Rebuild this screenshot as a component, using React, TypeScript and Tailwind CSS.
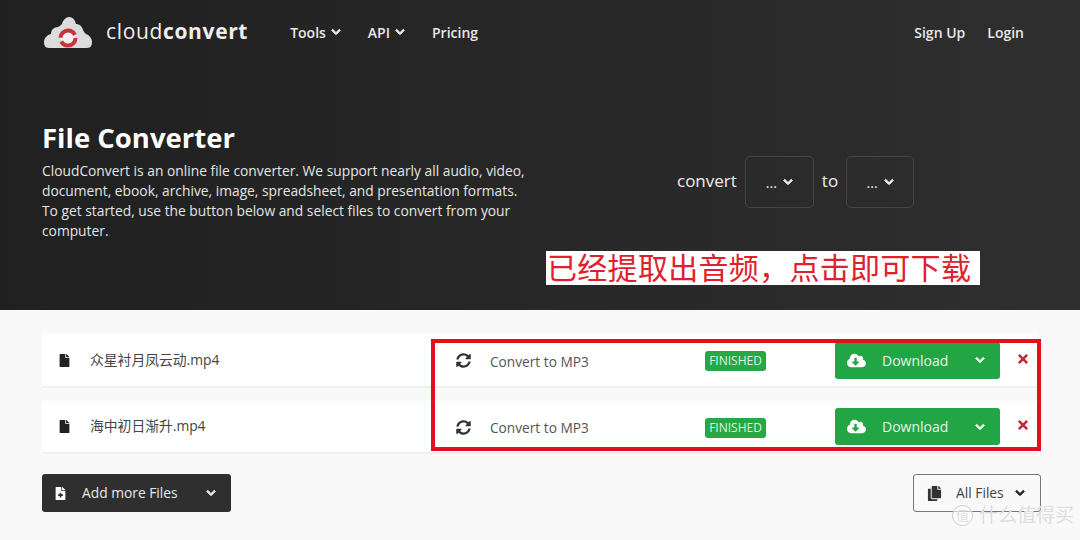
import { FaChevronDown, FaCloudDownloadAlt, FaCopy, FaFile, FaFileMedical, FaSyncAlt, FaTimes } from "react-icons/fa";

const files = ["众星衬月凤云动.mp4", "海中初日渐升.mp4"];

const Logo = () => (
  <svg width="48" height="32" viewBox="0 0 48 32" className="mt-[2px]" aria-hidden>
    <path
      d="M5 31 C1 31 0 28 0 25 C0 21 3 18 7 17 C7 13 10 10 14 10 C16 9 17 8 18 7 C19 3 22 0 25 0 C29 0 31 3 32 7 C35 7 38 9 39 13 C40 15 41 16 42 17 C45 18 48 21 48 25 C48 28 47 31 43 31 Z"
      fill="#dcdcdc"
    />
    <circle cx="24" cy="21" r="7.5" fill="#f0f0f0" stroke="#c8323c" strokeWidth="4" strokeDasharray="20 3.6" />
  </svg>
);

const FileRow = ({ name, second }: { name: string; second?: boolean }) => (
  <div
    className={`flex items-center bg-white border-b-2 border-[#f0f0f0] ${second ? "h-[53px] mt-[13px]" : "h-[54px]"}`}
  >
    <FaFile className="ml-[16px] text-[13px] text-[#222]" />
    <span className="ml-[19px] w-[366px] text-[13.8px] text-[#444]">{name}</span>
    <FaSyncAlt className="mt-[1px] text-[15px] text-[#333]" />
    <span className="ml-[19px] mt-[4px] w-[215px] text-[13.7px] text-[#555]">Convert to MP3</span>
    <span className="mt-[2px] flex h-[20px] w-[61px] items-center justify-center rounded-[3px] bg-[#28a745] text-[12px] text-[#dff3e3]">
      FINISHED
    </span>
    <button className="ml-[69px] flex h-[37px] w-[165px] items-center rounded-[3px] bg-[#22a544] px-[12px] text-[14px] text-[#e6f5ea]">
      <FaCloudDownloadAlt className="text-[19px] text-white" />
      <span className="ml-[16px] flex-1 text-left">Download</span>
      <FaChevronDown className="mr-[3px] text-[10px] stroke-[50]" />
    </button>
    <FaTimes className="ml-[16px] -mt-[3px] text-[14px] text-[#c32a3a]" />
  </div>
);

export default function App() {
  return (
    <div className="relative h-[540px] w-[1080px] overflow-hidden bg-[#f9f9f9] font-['Open_Sans','Noto_Sans_CJK_SC',sans-serif]">
      <header className="h-[310px] bg-gradient-to-r from-[#202020] to-[#2f2f2f]">
        <nav className="flex h-[64px] items-center pl-[44px] pr-[56px] text-white">
          <Logo />
          <span className="ml-[14px] text-[21px] tracking-[0.65px] text-[#eee]">
            cloud<b className="font-bold">convert</b>
          </span>
          <div className="ml-[42px] flex items-center gap-[27px] text-[14px] font-semibold text-[#e8e8e8]">
            <span className="flex items-center gap-[5px]">
              Tools <FaChevronDown className="text-[10px] stroke-[50]" />
            </span>
            <span className="flex items-center gap-[5px]">
              API <FaChevronDown className="text-[10px] stroke-[50]" />
            </span>
            <span>Pricing</span>
          </div>
          <div className="ml-auto flex gap-[22px] text-[14px] font-semibold text-[#e8e8e8]">
            <span>Sign Up</span>
            <span>Login</span>
          </div>
        </nav>
        <div className="flex pl-[42px] pt-[55px]">
          <div className="w-[500px]">
            <h1 className="text-[27.5px] leading-[38px] font-bold text-white">File Converter</h1>
            <p className="mt-[4px] w-[490px] text-[13.8px] leading-[20px] text-[#e4e4e4]">
              CloudConvert is an online file converter. We support nearly all audio, video, document, ebook, archive,
              image, spreadsheet, and presentation formats. To get started, use the button below and select files to
              convert from your computer.
            </p>
          </div>
          <div className="ml-[135px] mt-[37px] flex h-[52px] items-center text-[17px] text-[#eee]">
            <span className="-mt-[2px]">convert</span>
            <span className="ml-[8px] flex h-[52px] w-[69px] items-center justify-center gap-[6px] rounded-[5px] border border-[#444] text-[14px]">
              ... <FaChevronDown className="text-[10px] stroke-[50]" />
            </span>
            <span className="ml-[8px] -mt-[2px]">to</span>
            <span className="ml-[8px] flex h-[52px] w-[68px] items-center justify-center gap-[6px] rounded-[5px] border border-[#444] text-[14px]">
              ... <FaChevronDown className="text-[10px] stroke-[50]" />
            </span>
          </div>
        </div>
      </header>

      <main className="px-[42px] pt-[24px]">
        {files.map((f, i) => (
          <FileRow key={f} name={f} second={i === 1} />
        ))}
        <div className="mt-[20px] flex items-start justify-between">
          <button className="flex h-[38px] w-[189px] items-center rounded-[3px] bg-[#2f2f2f] px-[12px] text-[13.8px] text-[#e8e8e8]">
            <FaFileMedical className="text-[13px] text-white" />
            <span className="ml-[15px] flex-1 text-left">Add more Files</span>
            <FaChevronDown className="mr-[3px] text-[10px] stroke-[50]" />
          </button>
          <button className="-mr-[3px] flex h-[38px] w-[128px] items-center rounded-[3px] border border-[#777] px-[13px] text-[13.8px] text-[#444]">
            <FaCopy className="text-[15px] text-[#333]" />
            <span className="ml-[14px]">All Files</span>
            <FaChevronDown className="ml-[11px] text-[10px] stroke-[50] text-[#222]" />
          </button>
        </div>
      </main>

      {/* annotation on top of the screenshot */}
      <div className="absolute left-[546px] top-[251px] flex h-[34px] w-[434px] items-center bg-white pl-[1px] text-[30px] leading-none tracking-[0.3px] whitespace-nowrap text-[#e0202c]">
        已经提取出音频，点击即可下载
      </div>
      <div className="pointer-events-none absolute left-[431px] top-[339px] h-[112px] w-[610px] border-[4px] border-[#e30f1c]" />

      {/* watermark */}
      <div className="absolute left-[952px] top-[505px] flex items-center gap-[6px] text-[19px] leading-none text-[#dedede]">
        <span className="flex h-[21px] w-[21px] items-center justify-center rounded-full border border-[#ccc] bg-white/60 text-[13px]">值</span>
        <span>什么值得买</span>
      </div>
    </div>
  );
}
